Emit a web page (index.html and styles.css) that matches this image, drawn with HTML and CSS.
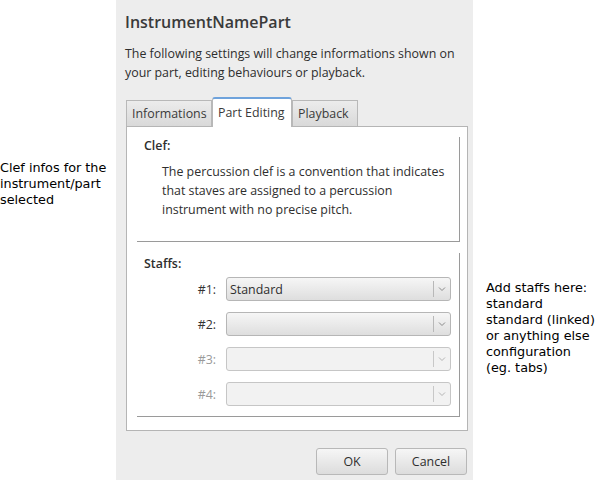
FILE: index.html
```html
<!DOCTYPE html>
<html>
<head>
<meta charset="utf-8">
<link rel="stylesheet" href="styles.css">
</head>
<body>
<div class="page">
  <div class="note note-left">Clef infos for the<br>instrument/part<br>selected</div>
  <div class="dialog">
    <div class="title">InstrumentNamePart</div>
    <div class="desc">The following settings will change informations shown on your part, editing behaviours or playback.</div>
    <div class="tabs">
      <div class="tab">Informations</div>
      <div class="tab active">Part Editing</div>
      <div class="tab">Playback</div>
    </div>
    <div class="pane">
      <div class="group clef">
        <div class="gtitle">Clef:</div>
        <div class="clef-text">The percussion clef is a convention that indicates that staves are assigned to a percussion instrument with no precise pitch.</div>
      </div>
      <div class="group staffs">
        <div class="gtitle">Staffs:</div>
        <div class="rows">
          <div class="row"><span class="lbl">#1:</span><div class="combo"><span class="val">Standard</span><span class="arrow"><svg width="8" height="6" viewBox="0 0 8 6"><path d="M1 1.5 L4 4.5 L7 1.5" fill="none" stroke="#8a8a8a" stroke-width="1"/></svg></span></div></div>
          <div class="row"><span class="lbl">#2:</span><div class="combo"><span class="val"></span><span class="arrow"><svg width="8" height="6" viewBox="0 0 8 6"><path d="M1 1.5 L4 4.5 L7 1.5" fill="none" stroke="#8a8a8a" stroke-width="1"/></svg></span></div></div>
          <div class="row disabled"><span class="lbl">#3:</span><div class="combo"><span class="val"></span><span class="arrow"><svg width="8" height="6" viewBox="0 0 8 6"><path d="M1 1.5 L4 4.5 L7 1.5" fill="none" stroke="#b5b5b5" stroke-width="1"/></svg></span></div></div>
          <div class="row disabled"><span class="lbl">#4:</span><div class="combo"><span class="val"></span><span class="arrow"><svg width="8" height="6" viewBox="0 0 8 6"><path d="M1 1.5 L4 4.5 L7 1.5" fill="none" stroke="#b5b5b5" stroke-width="1"/></svg></span></div></div>
        </div>
      </div>
    </div>
    <div class="buttons">
      <div class="btn">OK</div>
      <div class="btn">Cancel</div>
    </div>
  </div>
  <div class="note note-right">Add staffs here:<br>standard<br>standard (linked)<br>or anything else<br>configuration<br>(eg. tabs)</div>
</div>
</body>
</html>
```

FILE: styles.css
```css
html, body {
  margin: 0;
  padding: 0;
  background: #ffffff;
}
.page {
  display: flex;
  width: 595px;
  height: 480px;
  overflow: hidden;
}
.note {
  font-family: "DejaVu Sans", sans-serif;
  font-size: 12.8px;
  line-height: 16px;
  color: #000;
}
.note-left {
  width: 116px;
  flex: none;
  padding-top: 160px;
  box-sizing: border-box;
}
.note-right {
  padding-top: 280px;
  padding-left: 13px;
  white-space: nowrap;
}
.dialog {
  width: 357px;
  flex: none;
  background: #ededed;
  box-sizing: border-box;
  padding: 12px 5px 0 10px;
  font-family: "Open Sans", sans-serif;
  color: #2e2e2e;
  display: flex;
  flex-direction: column;
}
.title {
  font-size: 16px;
  font-weight: 600;
  color: #3a3a3a;
  line-height: 20px;
  margin-left: -1px;
}
.desc {
  font-size: 12.4px;
  line-height: 19px;
  margin-top: 12px;
  margin-left: -1px;
  width: 338px;
}
.tabs {
  display: flex;
  margin-top: 15px;
  height: 29px;
  align-items: flex-end;
  font-size: 12.4px;
}
.tab {
  height: 26px;
  box-sizing: border-box;
  padding: 0 5px;
  line-height: 25px;
  border: 1px solid #b8b8b8;
  border-bottom: none;
  background: linear-gradient(#ececec, #d9d9d9);
  color: #3a3a3a;
  white-space: nowrap;
}
.tab:first-child { width: 86px; }
.tab.active {
  height: 30px;
  width: 80px;
  background: #ffffff;
  border-color: #b8b8b8;
  border-top: 2px solid #6fa3dc;
  border-radius: 3px 3px 0 0;
  line-height: 27px;
  margin-bottom: -1px;
  position: relative;
  z-index: 1;
}
.tab:last-child { width: 66px; }
.pane {
  width: 342px;
  height: 305px;
  box-sizing: border-box;
  background: #ffffff;
  border: 1px solid #b5b5b5;
  padding: 10px 7px 0 10px;
  display: flex;
  flex-direction: column;
  gap: 11px;
}
.group {
  border-right: 1px solid #9a9a9a;
  border-bottom: 1px solid #9a9a9a;
  box-sizing: border-box;
}
.clef {
  height: 105px;
}
.staffs {
  height: 164px;
}
.gtitle {
  font-size: 12.4px;
  font-weight: 600;
  color: #2e2e2e;
  padding: 0 0 0 7px;
  line-height: 18px;
}
.staffs .gtitle { margin-top: 2px; }
.clef-text {
  font-size: 12.4px;
  line-height: 19px;
  padding-left: 25px;
  margin-top: 7px;
  width: 292px;
}
.rows {
  display: flex;
  flex-direction: column;
  gap: 11px;
  margin-top: 4px;
}
.row {
  display: flex;
  align-items: center;
  height: 24px;
}
.lbl {
  width: 79px;
  text-align: right;
  font-size: 12.4px;
  color: #333;
  padding-right: 10px;
}
.row.disabled .lbl { color: #9a9a9a; }
.combo {
  width: 225px;
  height: 24px;
  box-sizing: border-box;
  border: 1px solid #b6b6b6;
  border-radius: 3px;
  background: linear-gradient(#f6f6f6, #dedede);
  display: flex;
  align-items: center;
}
.row.disabled .combo {
  background: #f2f2f2;
  border-color: #c6c6c6;
}
.val {
  flex: 1;
  font-size: 12.4px;
  padding-left: 3px;
  color: #2e2e2e;
}
.arrow {
  width: 16px;
  height: 16px;
  border-left: 1px solid #b8b8b8;
  display: flex;
  align-items: center;
  justify-content: center;
}
.row.disabled .arrow { border-left-color: #c8c8c8; }
.buttons {
  display: flex;
  justify-content: flex-end;
  gap: 7px;
  margin-top: 17px;
  padding-right: 1px;
}
.btn {
  width: 72px;
  height: 27px;
  box-sizing: border-box;
  border: 1px solid #b8b8b8;
  border-radius: 3px;
  background: linear-gradient(#f6f6f6, #dcdcdc);
  text-align: center;
  line-height: 25px;
  font-size: 12.4px;
  color: #2e2e2e;
}
```
